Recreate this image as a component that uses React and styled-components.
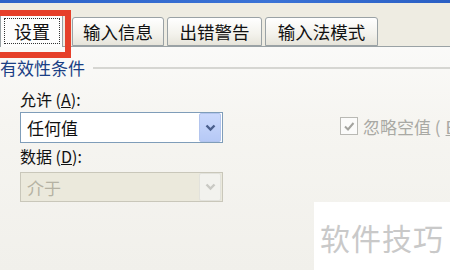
import React from 'react';
import styled, { createGlobalStyle } from 'styled-components';

const GlobalStyle = createGlobalStyle`
  html, body {
    margin: 0;
    padding: 0;
    background: #f2f1ec;
  }
  body {
    font-family: "Noto Sans CJK SC", "Noto Sans", sans-serif;
  }
`;

const Window = styled.div`
  position: relative;
  width: 450px;
  height: 270px;
  overflow: hidden;
  display: flex;
  flex-direction: column;
  background: linear-gradient(#fdfdfd 0%, #f6f5f1 45%, #f1f0eb 100%);
`;

const TitleEdge = styled.div`
  height: 3px;
  background: linear-gradient(90deg, #2d63c8, #3b73d6 60%, #2a5fc4);
`;

const TabStrip = styled.div`
  position: relative;
  height: 44px;
  display: flex;
  align-items: flex-end;
  gap: 3px;
  background: #eeece2;
  border-bottom: 1px solid #9aa2a5;
  box-sizing: border-box;
`;

const Tab = styled.div`
  box-sizing: border-box;
  display: flex;
  align-items: center;
  justify-content: center;
  height: ${({ $active }) => ($active ? '36px' : '29px')};
  padding: ${({ $active }) => ($active ? '2px 2px 0 3px' : '0 10px')};
  width: ${({ $w }) => $w}px;
  margin-bottom: ${({ $active }) => ($active ? '-1px' : '0')};
  margin-right: ${({ $active }) => ($active ? '6px' : '0')};
  background: ${({ $active }) =>
    $active ? '#fdfdfd' : 'linear-gradient(#ffffff, #f3f2ec 60%, #e6e4da)'};
  border: 1px solid #9aa2a5;
  border-bottom: ${({ $active }) => ($active ? 'none' : '1px solid #9aa2a5')};
  border-radius: 3px 3px 0 0;
  font-size: 17.5px;
  line-height: 1;
  color: #111;
  white-space: nowrap;
  z-index: ${({ $active }) => ($active ? 1 : 0)};
`;

const FocusRing = styled.div`
  flex: 1;
  height: 24px;
  display: flex;
  align-items: center;
  justify-content: center;
  border: 1px dotted #333;
  font-size: 18px;
`;

const Highlight = styled.div`
  position: absolute;
  left: -6px;
  top: 7px;
  width: 77px;
  height: 48px;
  box-sizing: border-box;
  border: 6px solid #e6402a;
  pointer-events: none;
  z-index: 3;
`;

const Panel = styled.div`
  flex: 1;
  display: flex;
  flex-direction: column;
  padding-top: 12px;
`;

const GroupHeader = styled.div`
  display: flex;
  align-items: center;
  gap: 8px;
  height: 18px;
`;

const GroupTitle = styled.span`
  font-size: 17px;
  color: #1a3f85;
  line-height: 18px;
  white-space: nowrap;
`;

const GroupRule = styled.div`
  flex: 1;
  height: 2px;
  background: #d6d6d2;
`;

const Form = styled.div`
  display: grid;
  grid-template-columns: 203px 1fr;
  padding-left: 20px;
  margin-top: 12px;
`;

const Label = styled.div`
  grid-column: 1;
  height: 20px;
  font-size: 16px;
  line-height: 20px;
  color: #111;
  white-space: nowrap;
  margin-top: ${({ $top }) => $top || 0}px;

  u {
    text-decoration: underline;
  }
`;

const Select = styled.div`
  grid-column: 1;
  box-sizing: border-box;
  height: ${({ $h }) => $h}px;
  margin-top: ${({ $top }) => $top || 0}px;
  display: flex;
  align-items: center;
  justify-content: space-between;
  border: 1px solid ${({ $disabled }) => ($disabled ? '#c9c7ba' : '#7f9db9')};
  background: ${({ $disabled }) => ($disabled ? '#ebe9dc' : '#ffffff')};
  padding: 0 1px 0 6px;
  font-size: 17px;
  color: ${({ $disabled }) => ($disabled ? '#b5b2a3' : '#111')};
`;

const DropButton = styled.div`
  width: 20px;
  height: ${({ $h }) => $h}px;
  display: flex;
  align-items: center;
  justify-content: center;
  border-radius: 2px;
  background: ${({ $disabled }) =>
    $disabled ? '#f2f2ee' : 'linear-gradient(#cbd9fc, #b6c9f6)'};
  border: 1px solid ${({ $disabled }) => ($disabled ? '#e2e2dc' : '#b3c5ee')};
`;

const CheckCell = styled.div`
  grid-column: 2;
  grid-row: 2;
  display: flex;
  align-items: center;
  gap: 5px;
  padding-left: 117px;
  font-size: 17px;
  color: #a9a9a4;
  white-space: nowrap;
`;

const CheckBox = styled.div`
  width: 16px;
  height: 16px;
  border: 1px solid #b9b9b4;
  background: #fbfbfa;
  display: flex;
  align-items: center;
  justify-content: center;
  flex-shrink: 0;
`;

const Watermark = styled.div`
  position: absolute;
  right: 0;
  bottom: 0;
  width: 136px;
  height: 68px;
  background: #ffffff;
  display: flex;
  align-items: center;
  justify-content: center;
  padding-top: 2px;
  box-sizing: border-box;
  font-size: 30px;
  color: #c9c9c9;
  letter-spacing: 1px;
`;

const Chevron = ({ color }) => (
  <svg width="11" height="8" viewBox="0 0 11 8">
    <path d="M1.5 1.5 L5.5 5.5 L9.5 1.5" fill="none" stroke={color} strokeWidth="2.4" />
  </svg>
);

const tabs = [
  { label: '输入信息', w: 92 },
  { label: '出错警告', w: 95 },
  { label: '输入法模式', w: 113 },
];

export default function App() {
  return (
    <Window>
      <GlobalStyle />
      <TitleEdge />
      <TabStrip>
        <Tab $active $w={63}>
          <FocusRing>设置</FocusRing>
        </Tab>
        {tabs.map((t) => (
          <Tab key={t.label} $w={t.w}>
            {t.label}
          </Tab>
        ))}
        <Highlight />
      </TabStrip>
      <Panel>
        <GroupHeader>
          <GroupTitle>有效性条件</GroupTitle>
          <GroupRule />
        </GroupHeader>
        <Form>
          <Label>
            允许 (<u>A</u>):
          </Label>
          <Select $h={31} $top={3}>
            任何值
            <DropButton $h={27}>
              <Chevron color="#4a5f8c" />
            </DropButton>
          </Select>
          <CheckCell>
            <CheckBox>
              <svg width="12" height="11" viewBox="0 0 12 11">
                <path d="M2 5.5 L5 8.5 L10.5 2" fill="none" stroke="#a3a39e" strokeWidth="2" />
              </svg>
            </CheckBox>
            忽略空值 (<u>B</u>)
          </CheckCell>
          <Label $top={3}>
            数据 (<u>D</u>):
          </Label>
          <Select $h={30} $top={6} $disabled>
            介于
            <DropButton $h={26} $disabled>
              <Chevron color="#c9c9c4" />
            </DropButton>
          </Select>
        </Form>
      </Panel>
      <Watermark>软件技巧</Watermark>
    </Window>
  );
}
